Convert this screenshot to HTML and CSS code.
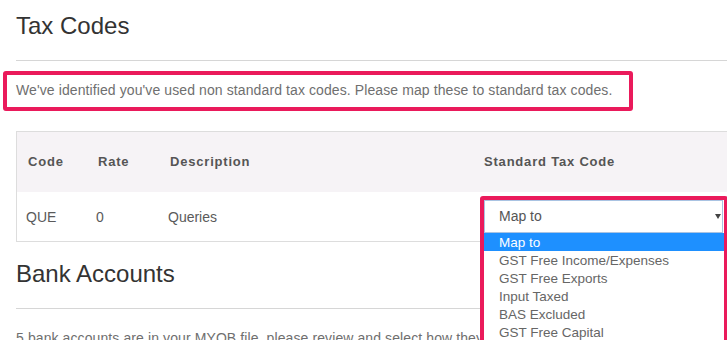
FILE: index.html
```html
<!DOCTYPE html>
<html lang="en">
<head>
  <meta charset="UTF-8">
  <title>Tax Codes</title>
  <meta name="viewport" content="width=device-width, initial-scale=1.0">
  <link rel="stylesheet" href="styles.css">
</head>
<body>

  <div class="page">
    <div class="page-header">
      <h2>Tax Codes</h2>
    </div>

    <p class="notice">We've identified you've used non standard tax codes. Please map these to standard tax codes.</p>

    <table class="tax-table">
      <colgroup>
        <col class="col-code">
        <col class="col-rate">
        <col class="col-desc">
        <col class="col-map">
      </colgroup>
      <tr class="head">
        <th>Code</th><th>Rate</th><th>Description</th><th>Standard Tax Code</th>
      </tr>
      <tr class="body">
        <td>QUE</td>
        <td>0</td>
        <td>Queries</td>
        <td class="map-cell">
          <div class="select">
            Map to
            <span class="caret"></span>
            <ul class="options">
              <li class="selected">Map to</li>
              <li>GST Free Income/Expenses</li>
              <li>GST Free Exports</li>
              <li>Input Taxed</li>
              <li>BAS Excluded</li>
              <li>GST Free Capital</li>
            </ul>
          </div>
        </td>
      </tr>
    </table>

    <div class="page-header second">
      <h2>Bank Accounts</h2>
    </div>

    <p class="intro">5 bank accounts are in your MYOB file, please review and select how they</p>
  </div>

</body>
</html>
```

FILE: styles.css
```css
body {
  margin: 0;
  padding: 0;
  font-family: "Liberation Sans", Arial, sans-serif;
  color: #555;
  background: #fff;
  overflow: hidden;
}
.page {
  width: 760px;
  padding-left: 16px;
}
.page-header {
  padding-bottom: 21px;
  border-bottom: 1px solid #d6d6d6;
}
.page-header h2 {
  margin: 13px 0 0;
  font-size: 24px;
  line-height: 26px;
  font-weight: normal;
  color: #333;
}
.page-header.second h2 {
  margin-top: 19px;
}
p {
  margin: 19px 0 0;
  font-size: 14px;
  line-height: 20px;
  letter-spacing: 0.1px;
  color: #6f6f6f;
}
.notice {
  position: relative;
}
/* annotation box drawn over the notice */
.notice::after {
  content: "";
  position: absolute;
  left: -13px;
  top: -9px;
  width: 630px;
  height: 40px;
  box-sizing: border-box;
  border: 4px solid #ea1a5b;
  border-radius: 3px;
}
.tax-table {
  width: 744px;
  margin-top: 31px;
  table-layout: fixed;
  border-collapse: separate;
  border-spacing: 0;
  border: 1px solid #ddd;
}
.col-code { width: 70px; }
.col-rate { width: 72px; }
.col-desc { width: 314px; }
.col-map { width: 286px; }
.head {
  height: 60px;
  background-color: #f6f3f6;
}
th {
  padding: 0 11px;
  text-align: left;
  font-size: 13px;
  line-height: 18px;
  font-weight: bold;
  letter-spacing: 0.8px;
  color: #555;
}
.body {
  height: 49px;
}
td {
  padding: 0 9px;
  font-size: 14px;
  line-height: 20px;
  color: #5a5a5a;
}
td.map-cell {
  padding-left: 11px;
}
.select {
  position: relative;
  width: 239px;
  height: 33px;
  box-sizing: border-box;
  padding: 0 14px;
  border: 1px solid #a9c3e2;
  background: #fff;
  font-size: 14px;
  line-height: 31px;
  color: #555;
}
/* annotation box drawn over the open dropdown */
.select::after {
  content: "";
  position: absolute;
  left: -5px;
  top: -5px;
  width: 248px;
  height: 170px;
  box-sizing: border-box;
  border: 4px solid #ea1a5b;
  border-radius: 3px;
  z-index: 10;
}
.caret {
  position: absolute;
  right: 1px;
  top: 13px;
  width: 0;
  height: 0;
  border-left: 3px solid transparent;
  border-right: 3px solid transparent;
  border-top: 5px solid #444;
}
.options {
  position: absolute;
  top: 32px;
  left: -1px;
  width: 240px;
  margin: 0;
  padding: 0;
  list-style: none;
  background: #fff;
  z-index: 5;
}
.options li {
  height: 18px;
  padding-left: 15px;
  font-size: 13.5px;
  line-height: 19px;
  color: #666;
  white-space: nowrap;
}
.options li.selected {
  background-color: #1e90ff;
  color: #fff;
}
```
